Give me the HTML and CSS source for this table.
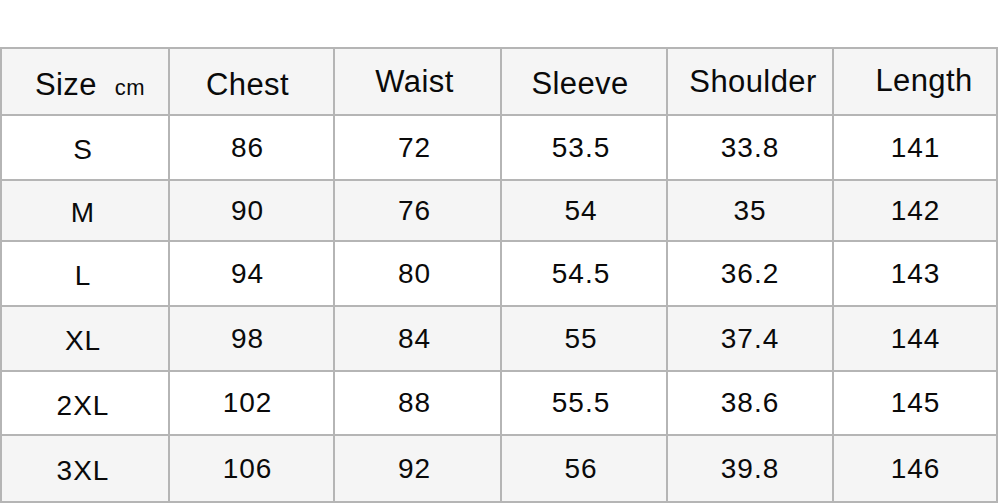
FILE: index.html
```html
<!DOCTYPE html>
<html>
<head>
<meta charset="utf-8">
<link rel="stylesheet" href="styles.css">
</head>
<body>
<table class="size-table">
  <colgroup>
    <col class="c1"><col class="c2"><col class="c3"><col class="c4"><col class="c5"><col class="c6">
  </colgroup>
  <tr class="head r-h">
    <th class="low"><span>Size</span><span class="unit">cm</span></th>
    <th class="low">Chest</th>
    <th>Waist</th>
    <th class="mid">Sleeve</th>
    <th>Shoulder</th>
    <th class="up">Length</th>
  </tr>
  <tr class="r1"><td class="sz">S</td><td>86</td><td>72</td><td>53.5</td><td>33.8</td><td>141</td></tr>
  <tr class="r2 alt"><td class="sz">M</td><td>90</td><td>76</td><td>54</td><td>35</td><td>142</td></tr>
  <tr class="r3"><td class="sz">L</td><td>94</td><td>80</td><td>54.5</td><td>36.2</td><td>143</td></tr>
  <tr class="r4 alt"><td class="sz">XL</td><td>98</td><td>84</td><td>55</td><td>37.4</td><td>144</td></tr>
  <tr class="r5"><td class="sz">2XL</td><td>102</td><td>88</td><td>55.5</td><td>38.6</td><td>145</td></tr>
  <tr class="r6 alt"><td class="sz">3XL</td><td>106</td><td>92</td><td>56</td><td>39.8</td><td>146</td></tr>
</table>
</body>
</html>
```

FILE: styles.css
```css
html, body {
  margin: 0;
  padding: 0;
  background: #ffffff;
}

body {
  font-family: "Liberation Sans", Arial, sans-serif;
  color: #0a0a0a;
  padding-top: 47px;
}

.size-table {
  border-collapse: collapse;
  table-layout: fixed;
  width: 996px;
}

.c1 { width: 168px; }
.c2 { width: 165px; }
.c3 { width: 167px; }
.c4 { width: 166px; }
.c5 { width: 166px; }
.c6 { width: 164px; }

.size-table th,
.size-table td {
  border: 2px solid #b5b5b5;
  text-align: center;
  vertical-align: middle;
  padding: 0;
}

.size-table th {
  font-weight: normal;
  font-size: 31px;
  letter-spacing: 0.4px;
  background: #f5f5f5;
}

.size-table td {
  font-size: 28px;
  letter-spacing: 1px;
}

/* per-column horizontal nudges */
.size-table td:nth-child(1) { padding-right: 4px; }
.size-table td:nth-child(2) { padding-right: 8px; }
.size-table td:nth-child(3) { padding-right: 6px; }
.size-table td:nth-child(4) { padding-right: 6px; }
.size-table td:nth-child(6) { padding-left: 1px; }

.head th:nth-child(1) { padding-left: 10px; }
.head th:nth-child(2) { padding-right: 8px; }
.head th:nth-child(3) { padding-right: 6px; }
.head th:nth-child(4) { padding-right: 8px; }
.head th:nth-child(5) { padding-left: 6px; }
.head th:nth-child(6) { padding-left: 18px; }

.head th.low { padding-top: 7px; }
.head th.mid { padding-top: 4px; }
.head th.up { padding-bottom: 2px; }

.unit {
  font-size: 22px;
  margin-left: 18px;
  letter-spacing: 0.5px;
}

.size-table td.sz { padding-top: 5px; }

.alt td { background: #f5f5f5; }

.r-h { height: 67px; }
.r1 { height: 65px; }
.r2 { height: 61px; }
.r3 { height: 65px; }
.r4 { height: 65px; }
.r5 { height: 64px; }
.r6 { height: 67px; }
```
